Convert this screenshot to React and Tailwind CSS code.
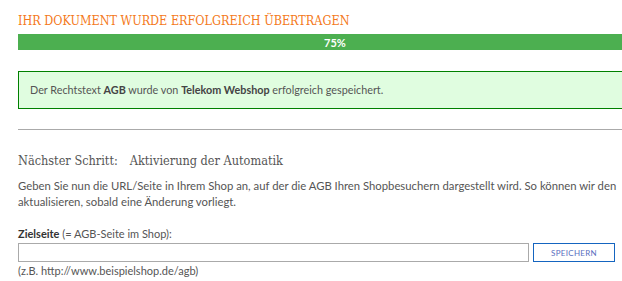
import React from "react";

export default function App() {
  const sans = { fontFamily: "Lato, 'Liberation Sans', sans-serif" };
  return (
    <div className="w-[622px] h-[281px] overflow-hidden bg-white" style={sans}>
      <div className="w-[634px] ml-[18px] pt-[13px]">
        <h1
          className="text-[12.5px] leading-[16px] text-[#f47920] font-normal"
          style={{ fontFamily: "'DejaVu Serif', serif", fontStretch: "condensed" }}
        >
          IHR DOKUMENT WURDE ERFOLGREICH ÜBERTRAGEN
        </h1>
        <div className="mt-[5px] h-[16px] bg-[#4caf50] flex items-center justify-center text-white text-[11px] font-bold leading-none">
          75%
        </div>
        <div className="mt-[21px] h-[38px] border border-[#008000] bg-[#e0fde0] flex items-center px-[11px] text-[10.8px] text-[#555]">
          <span>
            Der Rechtstext <b className="text-[#444]">AGB</b> wurde von{" "}
            <b className="text-[#444]">Telekom Webshop</b> erfolgreich gespeichert.
          </span>
        </div>
        <div className="mt-[20px] h-px bg-[#aaa]" />
        <div
          className="mt-[23px] text-[12.6px] leading-[16px] text-[#555] flex"
          style={{ fontFamily: "'DejaVu Serif', serif", fontStretch: "condensed" }}
        >
          <span>Nächster Schritt:</span>
          <span className="ml-[12px]">Aktivierung der Automatik</span>
        </div>
        <p className="mt-[9px] text-[11.3px] leading-[16px] text-[#555]">
          Geben Sie nun die URL/Seite in Ihrem Shop an, auf der die AGB Ihren Shopbesuchern dargestellt wird. So können wir den
          <br />
          aktualisieren, sobald eine Änderung vorliegt.
        </p>
        <div className="mt-[17px] text-[11px] leading-[14px] text-[#555]">
          <b className="text-[#333]">Zielseite</b> (= AGB-Seite im Shop):
        </div>
        <div className="mt-[2px] flex gap-[4px] items-stretch">
          <input
            type="text"
            className="w-[511px] h-[19px] border border-[#aaa] outline-none bg-white"
          />
          <button className="w-[82px] h-[19px] border border-[#1565c0] bg-white text-[8px] text-[#5a6fc0] tracking-[0.3px] flex items-center justify-center">
            SPEICHERN
          </button>
        </div>
        <div className="mt-[2px] text-[11px] leading-[14px] text-[#555]">
          (z.B. http://www.beispielshop.de/agb)
        </div>
      </div>
    </div>
  );
}
